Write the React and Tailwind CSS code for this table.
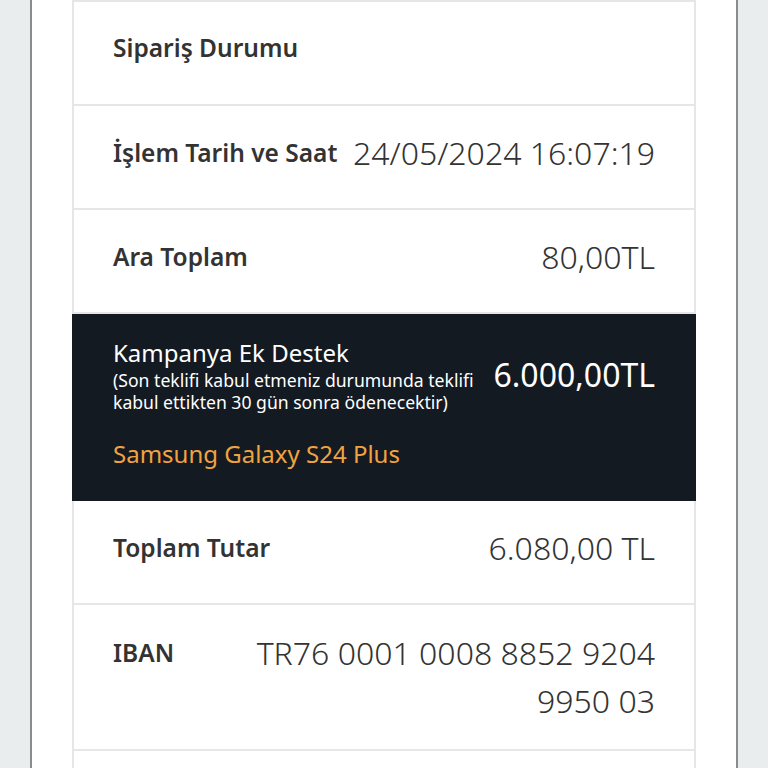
import React from 'react';

const rows = [
  { label: 'İşlem Tarih ve Saat', value: '24/05/2024 16:07:19' },
  { label: 'Ara Toplam', value: '80,00TL' },
];

const Row = ({ label, value }) => (
  <div className="flex items-center justify-between gap-2 border-b-2 border-[#e6e6e6] pl-[39px] pr-[39px] pt-[23px] pb-[31px]">
    <span className="text-[24.5px] leading-[48px] font-semibold text-[#333] whitespace-nowrap">{label}</span>
    <span className="text-[32px] leading-[48px] font-light text-[#333] whitespace-nowrap">{value}</span>
  </div>
);

export default function App() {
  return (
    <div className="h-[768px] overflow-hidden bg-[#eaeded] px-[30px]" style={{ fontFamily: '"Noto Sans", "Open Sans", sans-serif' }}>
      <div className="h-full bg-white border-x-2 border-[#8c8c8c] px-[40px]">
        <div className="border-x-2 border-t-2 border-[#e6e6e6]">
          {/* order status */}
          <div className="border-b-2 border-[#e6e6e6] pl-[39px] pt-[22px] pb-[32px]">
            <span className="text-[24.5px] leading-[48px] font-semibold text-[#333]">Sipariş Durumu</span>
          </div>

          {rows.map(r => (
            <Row key={r.label} {...r} />
          ))}

          {/* campaign block */}
          <div className="bg-[#131a22] -mx-[2px] pl-[41px] pr-[41px] pt-[23px] pb-[31px]">
            <div className="flex items-center justify-between">
              <div className="flex flex-col">
                <span className="text-[24px] leading-[32px] text-white">Kampanya Ek Destek</span>
                <span className="text-[17.6px] leading-[22px] text-white whitespace-nowrap">
                  (Son teklifi kabul etmeniz durumunda teklifi
                  <br />
                  kabul ettikten 30 gün sonra ödenecektir)
                </span>
              </div>
              <span className="text-[32px] leading-[40px] text-white whitespace-nowrap">6.000,00TL</span>
            </div>
            <div className="mt-[25px] text-[24px] leading-[32px] text-[#f0a340]">Samsung Galaxy S24 Plus</div>
          </div>

          <Row label="Toplam Tutar" value="6.080,00 TL" />

          {/* IBAN */}
          <div className="flex items-start justify-between border-b-2 border-[#e6e6e6] pl-[39px] pr-[39px] py-[24px]">
            <span className="text-[24.5px] leading-[48px] font-semibold text-[#333]">IBAN</span>
            <span className="text-[32px] leading-[48px] font-light text-[#333] text-right">
              TR76 0001 0008 8852 9204
              <br />
              9950 03
            </span>
          </div>

          <div className="h-[60px]" />
        </div>
      </div>
    </div>
  );
}
